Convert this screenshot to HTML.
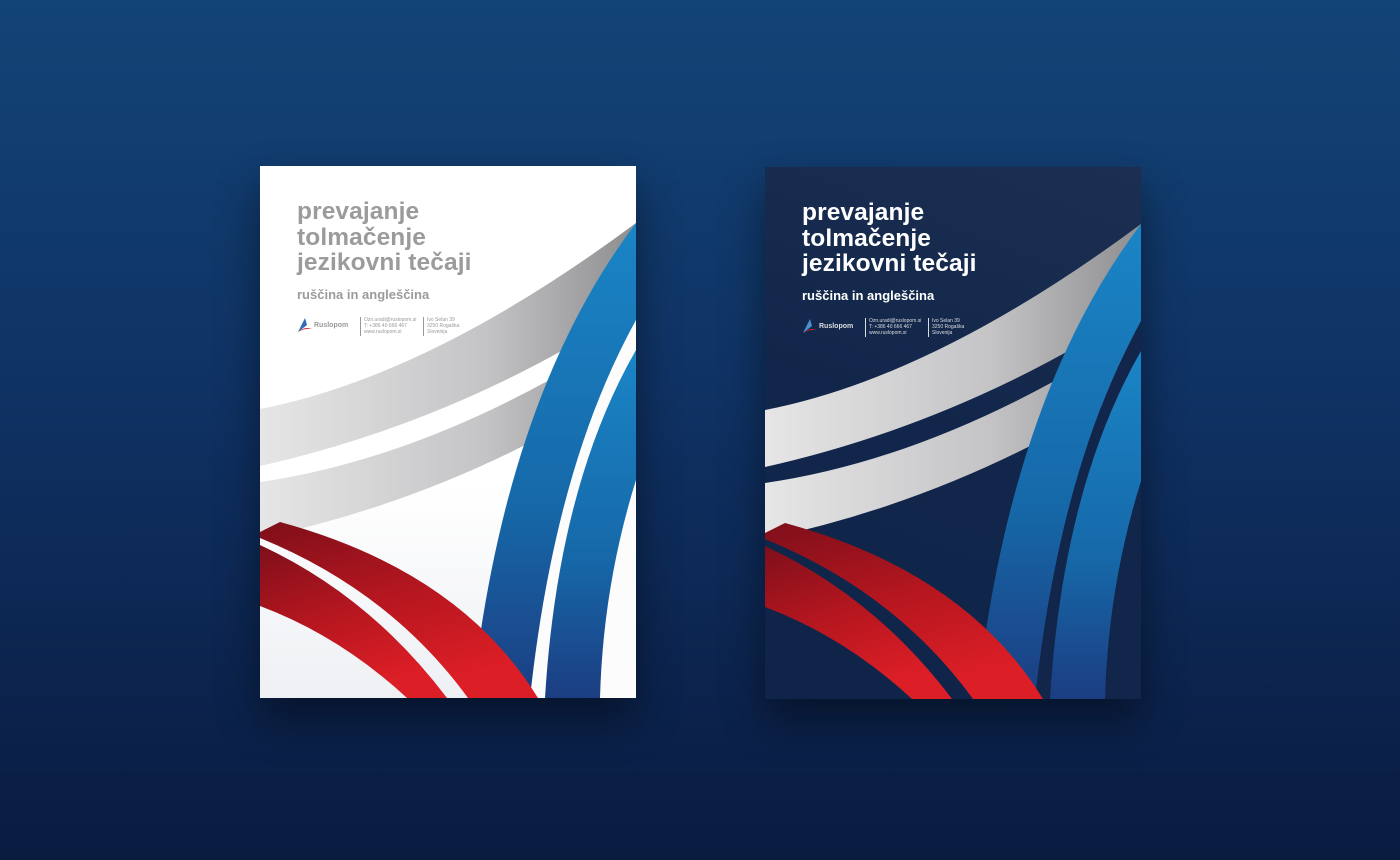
<!DOCTYPE html>
<html><head><meta charset="utf-8"><style>
html,body{margin:0;padding:0}
body{width:1400px;height:860px;overflow:hidden;background:linear-gradient(180deg,#134477 0%,#0f3264 45%,#0a1b40 100%);font-family:"Liberation Sans",sans-serif;position:relative}
.p{position:absolute;width:376px;height:532px;box-shadow:0 20px 40px rgba(0,0,0,.45);overflow:hidden}
.p svg{position:absolute;left:0;top:0}
.t{position:absolute;left:37px;top:33px;font-weight:bold;font-size:24.5px;line-height:25.5px;letter-spacing:.1px}
.s{position:absolute;left:37px;top:121px;font-weight:bold;font-size:13px}
.lg{position:absolute;left:37px;top:151px;height:20px;font-size:5px;line-height:6px}
.lg .n{position:absolute;left:17px;top:6px;font-size:7px;font-weight:bold;white-space:nowrap}
.lg .c{position:absolute;left:63px;top:0;border-left:1px solid currentColor;padding-left:3px;height:19px;white-space:nowrap}
.lg .d{position:absolute;left:126px;top:0;border-left:1px solid currentColor;padding-left:3px;height:19px;white-space:nowrap}
</style></head><body>

<svg width="0" height="0" style="position:absolute">
<defs>
<linearGradient id="gr" x1="0" y1="0" x2="1" y2="0"><stop offset="0" stop-color="#e6e6e7"/><stop offset=".6" stop-color="#c4c4c6"/><stop offset="1" stop-color="#8e8e91"/></linearGradient>
<linearGradient id="bl" x1="0" y1="0" x2="0" y2="1"><stop offset="0" stop-color="#1a85c6"/><stop offset=".6" stop-color="#1668a8"/><stop offset="1" stop-color="#1c3d82"/></linearGradient>
<linearGradient id="rd" x1="0" y1="0" x2=".4" y2="1"><stop offset="0" stop-color="#7e0f1a"/><stop offset=".5" stop-color="#b3161f"/><stop offset="1" stop-color="#dc1e26"/></linearGradient>
</defs></svg>

<div class="p" style="left:260px;top:166px;background:linear-gradient(180deg,#fff 60%,#eef0f4 100%)">
<svg width="376" height="532" viewBox="0 0 376 532">
<path d="M0,243 Q170,210 376,57 L376,140 Q200,255 0,300 Z" fill="url(#gr)"/>
<path d="M0,316 Q180,290 376,162 L376,215 Q200,330 0,372 Z" fill="url(#gr)"/>
<path d="M376,154 Q295,300 270,532 L376,532 Z" fill="#fcfcfd"/>
<path d="M376,57 Q245,230 212,532 L270,532 Q295,300 376,154 Z" fill="url(#bl)"/>
<path d="M376,184 Q298,320 285,532 L340,532 Q343,420 376,314 Z" fill="url(#bl)"/>
<path d="M20,356 Q200,405 278,532 L208,532 Q130,425 0,372 L0,366 Z" fill="url(#rd)"/>
<path d="M0,379 Q110,430 187,532 L147,532 Q80,470 0,440 Z" fill="url(#rd)"/>
</svg>
<div class="t" style="color:#9b9b9b">prevajanje<br>tolmačenje<br>jezikovni tečaji</div>
<div class="s" style="color:#9b9b9b">ruščina in angleščina</div>
<div class="lg" style="color:#999"><svg width="16" height="16" viewBox="0 0 16 16"><path d="M1,15 L8,1 L10,8 Z" fill="#2b6fb5"/><path d="M1,15 Q8,9 15,12 Q8,11 1,15Z" fill="#d0202a"/></svg><span class="n">Ruslopom</span><span class="c">Ozn.uradi@ruslopom.si<br>T: +386 40 666 467<br>www.ruslopom.si</span><span class="d">Ivo Selan 39<br>3250 Rogaška<br>Slovenija</span></div>
</div>

<div class="p" style="left:765px;top:167px;background:linear-gradient(200deg,#1c2f52 0%,#11264a 50%,#10244a 100%)">
<svg width="376" height="532" viewBox="0 0 376 532">
<path d="M0,243 Q170,210 376,57 L376,140 Q200,255 0,300 Z" fill="url(#gr)"/>
<path d="M0,316 Q180,290 376,162 L376,215 Q200,330 0,372 Z" fill="url(#gr)"/>
<path d="M376,154 Q295,300 270,532 L376,532 Z" fill="#11264a"/>
<path d="M376,57 Q245,230 212,532 L270,532 Q295,300 376,154 Z" fill="url(#bl)"/>
<path d="M376,184 Q298,320 285,532 L340,532 Q343,420 376,314 Z" fill="url(#bl)"/>
<path d="M20,356 Q200,405 278,532 L208,532 Q130,425 0,372 L0,366 Z" fill="url(#rd)"/>
<path d="M0,379 Q110,430 187,532 L147,532 Q80,470 0,440 Z" fill="url(#rd)"/>
</svg>
<div class="t" style="color:#fff">prevajanje<br>tolmačenje<br>jezikovni tečaji</div>
<div class="s" style="color:#fff">ruščina in angleščina</div>
<div class="lg" style="color:#ddd"><svg width="16" height="16" viewBox="0 0 16 16"><path d="M1,15 L8,1 L10,8 Z" fill="#4a8fd0"/><path d="M1,15 Q8,9 15,12 Q8,11 1,15Z" fill="#d0202a"/></svg><span class="n">Ruslopom</span><span class="c">Ozn.uradi@ruslopom.si<br>T: +386 40 666 467<br>www.ruslopom.si</span><span class="d">Ivo Selan 39<br>3250 Rogaška<br>Slovenija</span></div>
</div>

</body></html>
